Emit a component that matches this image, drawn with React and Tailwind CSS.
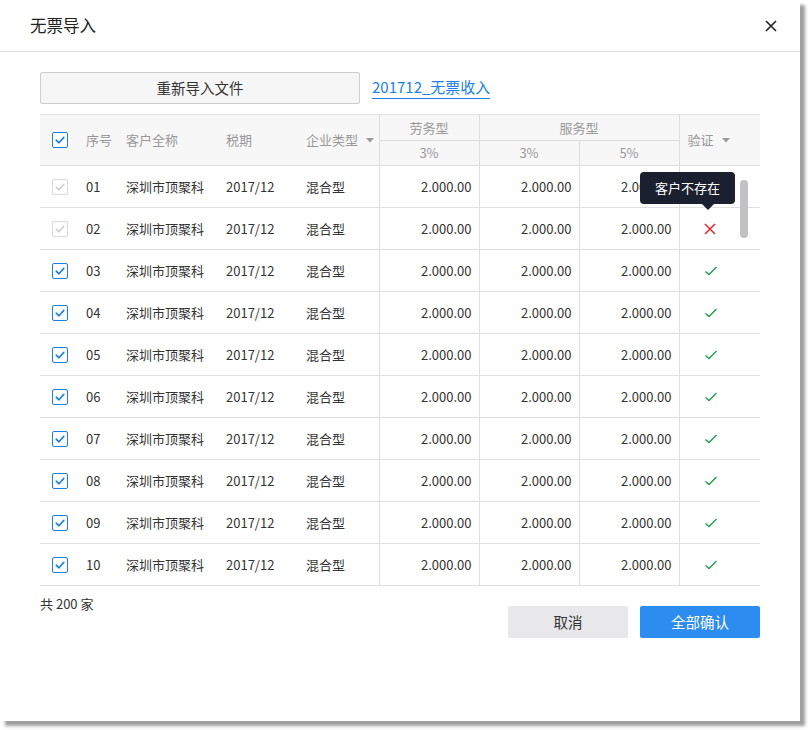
import React from "react";

const rows = ["01", "02", "03", "04", "05", "06", "07", "08", "09", "10"];

function Check({ disabled }) {
  return (
    <span
      className={
        "flex h-[16px] w-[16px] items-center justify-center rounded-[2px] border " +
        (disabled ? "border-[#d9d9d9] bg-white" : "border-[#1a7fe6] bg-white")
      }
    >
      <svg width="12" height="12" viewBox="0 0 12 12" fill="none">
        <path
          d="M2.2 6.2 L5 8.8 L9.8 3.4"
          stroke={disabled ? "#cfcfcf" : "#1a7fe6"}
          strokeWidth="1.6"
          strokeLinecap="round"
          strokeLinejoin="round"
        />
      </svg>
    </span>
  );
}

function Caret() {
  return (
    <svg width="8" height="5" viewBox="0 0 8 5" className="ml-[8px] inline-block">
      <path d="M0 0 H8 L4 4.5 Z" fill="#999" />
    </svg>
  );
}

export default function App() {
  return (
    <div
      className="min-h-[730px] bg-white text-[#333]"
      style={{ fontFamily: '"Noto Sans CJK SC", "Noto Sans", sans-serif' }}
    >
      <div className="flex h-[721px] w-[800px] flex-col bg-white shadow-[5px_5px_3px_rgba(0,0,0,0.38)]">
        <div className="flex h-[52px] items-center justify-between border-b border-[#dcdcdc] pl-[30px] pr-[23px]">
          <span className="text-[16.5px] text-[#222]">无票导入</span>
          <svg width="12" height="12" viewBox="0 0 12 12">
            <path d="M1 1 L11 11 M11 1 L1 11" stroke="#222" strokeWidth="1.6" />
          </svg>
        </div>

        <div className="px-[40px] pt-[20px]">
          <div className="flex items-center">
            <button className="h-[32px] w-[320px] rounded-[2px] border border-[#cfcfcf] bg-[#f6f6f6] text-[14.5px] text-[#333]">
              重新导入文件
            </button>
            <span className="ml-[12px] border-b border-[#1a7fe6] pb-[1px] text-[15px] leading-[20px] text-[#1a7fe6]">
              201712_无票收入
            </span>
          </div>

          <div className="relative mt-[10px]">
            <table className="w-[720px] table-fixed border-collapse text-[13px]">
              <colgroup>
                <col className="w-[40px]" />
                <col className="w-[40px]" />
                <col className="w-[100px]" />
                <col className="w-[80px]" />
                <col className="w-[79px]" />
                <col className="w-[100px]" />
                <col className="w-[100px]" />
                <col className="w-[100px]" />
                <col className="w-[81px]" />
              </colgroup>
              <thead className="bg-[#f7f7f7] text-[#999]">
                <tr className="h-[26px] border-t border-[#e3e3e3]">
                  <td rowSpan={2} className="border-b border-[#dedede] pl-[12px]">
                    <Check />
                  </td>
                  <td rowSpan={2} className="border-b border-[#dedede] pl-[6px]">序号</td>
                  <td rowSpan={2} className="border-b border-[#dedede] pl-[6px]">客户全称</td>
                  <td rowSpan={2} className="border-b border-[#dedede] pl-[6px]">税期</td>
                  <td rowSpan={2} className="border-b border-[#dedede] pl-[6px]">
                    <span className="flex items-center">
                      企业类型
                      <Caret />
                    </span>
                  </td>
                  <td className="border-b border-l border-[#dedede] text-center">劳务型</td>
                  <td colSpan={2} className="border-b border-l border-[#dedede] text-center">服务型</td>
                  <td rowSpan={2} className="border-b border-l border-[#dedede] pl-[8px]">
                    <span className="flex items-center">
                      验证
                      <Caret />
                    </span>
                  </td>
                </tr>
                <tr className="h-[25px]">
                  <td className="border-b border-l border-[#dedede] text-center">3%</td>
                  <td className="border-b border-l border-[#dedede] text-center">3%</td>
                  <td className="border-b border-l border-[#dedede] text-center">5%</td>
                </tr>
              </thead>
              <tbody>
                {rows.map((n, i) => (
                  <tr key={n} className="h-[42px] border-b border-[#e0e0e0]">
                    <td className="pl-[12px]">
                      <Check disabled={i < 2} />
                    </td>
                    <td className="pl-[6px]">{n}</td>
                    <td className="pl-[6px]">深圳市顶聚科</td>
                    <td className="pl-[6px]">2017/12</td>
                    <td className="pl-[6px]">混合型</td>
                    <td className="border-l border-[#e0e0e0] pr-[7px] text-right">2.000.00</td>
                    <td className="border-l border-[#e0e0e0] pr-[7px] text-right">2.000.00</td>
                    <td className="border-l border-[#e0e0e0] pr-[7px] text-right">2.000.00</td>
                    <td className="border-l border-[#e0e0e0] pl-[24px]">
                      {i === 0 ? null : i === 1 ? (
                        <svg width="12" height="12" viewBox="0 0 12 12">
                          <path d="M1 1 L11 11 M11 1 L1 11" stroke="#e8262a" strokeWidth="1.5" />
                        </svg>
                      ) : (
                        <svg width="14" height="12" viewBox="0 0 14 12">
                          <path
                            d="M1.5 6.5 L5 9.5 L12.5 2"
                            stroke="#1f9d4c"
                            strokeWidth="1.4"
                            fill="none"
                          />
                        </svg>
                      )}
                    </td>
                  </tr>
                ))}
              </tbody>
            </table>

            <div className="absolute left-[600px] top-[58px] flex h-[32px] w-[95px] items-center justify-center rounded-[4px] bg-[#1b2030] text-[13px] text-white">
              客户不存在
              <span className="absolute bottom-[-6px] left-[62px] h-0 w-0 border-x-[6px] border-t-[6px] border-x-transparent border-t-[#1b2030]" />
            </div>
            <div className="absolute left-[700px] top-[66px] h-[58px] w-[8px] rounded-full bg-[#c2c2c4]" />
          </div>

          <div className="flex items-start justify-between">
            <span className="pt-[8px] text-[13px] text-[#333]">共 200 家</span>
            <div className="mt-[20px] flex gap-[12px]">
              <button className="h-[32px] w-[120px] rounded-[2px] bg-[#e8e8ea] text-[14.5px] text-[#333]">
                取消
              </button>
              <button className="h-[32px] w-[120px] rounded-[2px] bg-[#2d8cf0] text-[14.5px] text-white">
                全部确认
              </button>
            </div>
          </div>
        </div>
      </div>
    </div>
  );
}
